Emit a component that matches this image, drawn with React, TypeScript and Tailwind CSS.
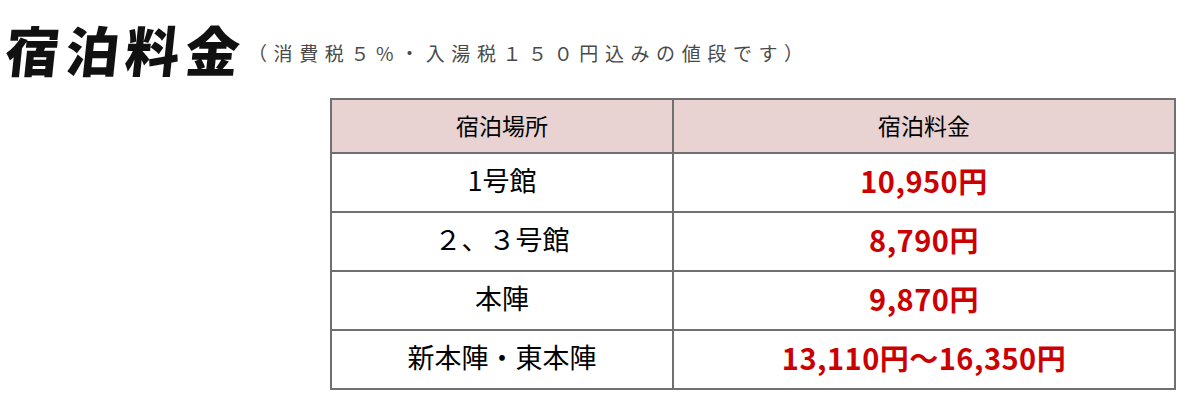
const rows = [
  { place: "1号館", price: "10,950円" },
  { place: "２、３号館", price: "8,790円" },
  { place: "本陣", price: "9,870円" },
  { place: "新本陣・東本陣", price: "13,110円〜16,350円" },
];

const App = () => {
  return (
    <div className="h-[405px] w-[1200px] bg-white font-['Noto_Sans_CJK_JP',sans-serif] text-black">
      <div className="flex h-[98px] items-start pt-[16px] pl-[6px]">
        <h1 className="-skew-x-6 text-[54px] leading-[66px] font-black tracking-[6px] text-[#111]">
          宿泊料金
        </h1>
        <p className="ml-[2px] pt-[24px] text-[19px] leading-[26px] tracking-[6.6px] text-[#4a4a4a]">
          （消費税５%・入湯税１５０円込みの値段です）
        </p>
      </div>

      <div className="pl-[330px]">
        <table className="w-[846px] border-collapse border-2 border-[#707070] text-center">
          <thead>
            <tr className="h-[54px] bg-[#e8d2d2]">
              <th className="w-[342px] border-2 border-[#707070] pb-[2px] text-[23px] font-normal">
                宿泊場所
              </th>
              <th className="border-2 border-[#707070] pb-[2px] text-[23px] font-normal">
                宿泊料金
              </th>
            </tr>
          </thead>
          <tbody>
            {rows.map((row) => (
              <tr key={row.place} className="h-[59px]">
                <td className="border-2 border-[#707070] pb-[6px] text-[27px] leading-[32px]">
                  {row.place}
                </td>
                <td className="border-2 border-[#707070] pb-[6px] text-[29px] leading-[32px] font-bold tracking-[0.5px] text-[#cc0000]">
                  {row.price}
                </td>
              </tr>
            ))}
          </tbody>
        </table>
      </div>
    </div>
  );
};

export default App;
